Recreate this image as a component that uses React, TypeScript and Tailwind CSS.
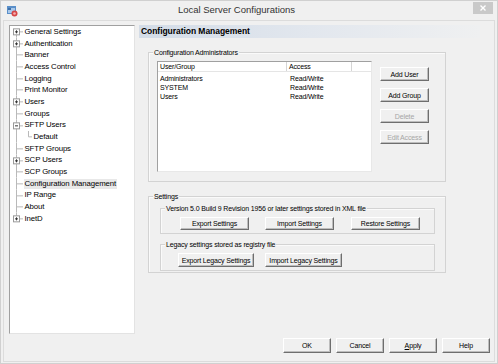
import React from "react"

type Node = {
  label: string
  box?: "+" | "-"
  level?: number
  first?: boolean
  last?: boolean
  selected?: boolean
}

const tree: Node[] = [
  { label: "General Settings", box: "+", first: true },
  { label: "Authentication", box: "+" },
  { label: "Banner" },
  { label: "Access Control" },
  { label: "Logging" },
  { label: "Print Monitor" },
  { label: "Users", box: "+" },
  { label: "Groups" },
  { label: "SFTP Users", box: "-" },
  { label: "Default", level: 1 },
  { label: "SFTP Groups" },
  { label: "SCP Users", box: "+" },
  { label: "SCP Groups" },
  { label: "Configuration Management", selected: true },
  { label: "IP Range" },
  { label: "About" },
  { label: "InetD", box: "+", last: true },
]

const admins = [
  ["Administrators", "Read/Write"],
  ["SYSTEM", "Read/Write"],
  ["Users", "Read/Write"],
]

function Gutter({ node }: { node: Node }) {
  const h = 11.7
  const c = h / 2
  const top = node.first ? c : 0
  const bottom = node.last ? c : h
  return (
    <svg width="13" height={h} viewBox={`0 0 13 ${h}`} className="shrink-0 overflow-visible">
      <line x1="6.5" y1={top} x2="6.5" y2={bottom} stroke="#b9b9b9" strokeWidth="1" />
      {!node.level && (
        <line x1={node.box ? 10 : 6.5} y1={c} x2="13" y2={c} stroke="#b9b9b9" strokeWidth="1" />
      )}
      {node.box && (
        <g>
          <rect x="3.5" y={c - 3} width="6" height="6" fill="#fff" stroke="#999" strokeWidth="1" />
          <line x1="5" y1={c} x2="8" y2={c} stroke="#333" strokeWidth="1" />
          {node.box === "+" && <line x1="6.5" y1={c - 1.5} x2="6.5" y2={c + 1.5} stroke="#333" strokeWidth="1" />}
        </g>
      )}
    </svg>
  )
}

function ChildGutter() {
  const h = 11.7
  const c = h / 2
  return (
    <svg width="9" height={h} viewBox={`0 0 9 ${h}`} className="shrink-0">
      <line x1="5.5" y1="0" x2="5.5" y2={c} stroke="#b9b9b9" strokeWidth="1" />
      <line x1="5.5" y1={c} x2="9" y2={c} stroke="#b9b9b9" strokeWidth="1" />
    </svg>
  )
}

function Btn({
  children,
  className,
  disabled,
}: {
  children: React.ReactNode
  className: string
  disabled?: boolean
}) {
  return (
    <div
      className={`flex items-center justify-center bg-[#f0f0f0] border border-t-white border-l-white border-r-[#6e6e6e] border-b-[#6e6e6e] shadow-[inset_-1px_-1px_0_#bdbdbd] text-[7px] tracking-[-0.15px] leading-none ${
        disabled ? "text-[#a6a6a6]" : "text-black"
      } ${className}`}
    >
      {children}
    </div>
  )
}

function Group({
  label,
  className,
  children,
}: {
  label: string
  className: string
  children?: React.ReactNode
}) {
  return (
    <div className={`relative border border-[#d3d3d3] shadow-[inset_1px_1px_0_#fafafa] ${className}`}>
      <span className="absolute left-[4px] top-[-5px] bg-[#f0f0f0] px-[1px] text-[7px] leading-[9px] tracking-[-0.15px] text-black whitespace-nowrap">
        {label}
      </span>
      {children}
    </div>
  )
}

export default function App() {
  return (
    <div className="w-[498px] h-[364px] bg-[#f0f0f0] border border-[#d0d0d0] flex flex-col font-['Liberation_Sans',Arial,sans-serif] overflow-hidden">
      {/* Title bar */}
      <div className="h-[19px] flex items-center shrink-0 relative">
        <svg width="11" height="11" viewBox="0 0 11 11" className="ml-[6px] mt-[1px]">
          <rect x="0" y="0" width="9" height="8" fill="#5a8fc9" />
          <rect x="1" y="2" width="7" height="5" fill="#a9c8ea" />
          <rect x="1" y="2" width="3" height="2" fill="#3d6fa8" />
          <circle cx="7.5" cy="7.5" r="3" fill="#d64545" />
          <circle cx="7.5" cy="7.5" r="1.3" fill="#f2b0b0" />
        </svg>
        <div className="flex-1 text-center text-[9.5px] text-[#333] pr-[18px]">Local Server Configurations</div>
        <div className="w-[20px] h-[12px] bg-[#c9c9c9] mr-[4px] mb-[6px] flex items-center justify-center">
          <svg width="6" height="6" viewBox="0 0 6 6">
            <path d="M0.5 0.5 L5.5 5.5 M5.5 0.5 L0.5 5.5" stroke="#fff" strokeWidth="1.4" />
          </svg>
        </div>
      </div>

      {/* Client */}
      <div className="mx-[2px] mb-[1px] flex-1 border border-[#dcdcdc] flex flex-col">
        <div className="flex pt-[4px] pl-[5px]">
          {/* Tree */}
          <div className="w-[126px] h-[309px] bg-white border border-t-[#a0a0a0] border-l-[#a0a0a0] border-r-[#e3e3e3] border-b-[#e3e3e3] flex flex-col">
            {tree.map((n) => (
              <div key={n.label} className="h-[11.7px] flex items-center">
                {n.level ? (
                  <>
                    <Gutter node={{ label: "", level: 1 }} />
                    <ChildGutter />
                  </>
                ) : (
                  <Gutter node={n} />
                )}
                <span
                  className={`ml-[1px] px-[0.5px] text-[7.8px] leading-[10px] tracking-[-0.1px] text-black whitespace-nowrap ${
                    n.selected ? "bg-[#e8e8e8]" : ""
                  }`}
                >
                  {n.label}
                </span>
              </div>
            ))}
          </div>

          {/* Right panel */}
          <div className="ml-[4px] w-[341px] flex flex-col">
            <div className="h-[13px] bg-gradient-to-r from-[#d3dce7] via-[#e2e7ee] to-[#eff0f1] flex items-center pl-[2px]">
              <span className="text-[8.5px] font-bold text-black tracking-[-0.05px]">Configuration Management</span>
            </div>

            <Group label="Configuration Administrators" className="mt-[14px] ml-[9px] w-[298px] h-[130px] flex pl-[8px] pt-[8px]">
              {/* List view */}
              <div className="w-[215px] h-[111px] bg-white border border-t-[#a0a0a0] border-l-[#a0a0a0] border-r-[#e8e8e8] border-b-[#e8e8e8] flex flex-col text-[7px] tracking-[-0.15px] text-black">
                <div className="h-[10px] flex border-b border-[#e5e5e5] leading-none">
                  <div className="w-[129px] border-r border-[#d5d5d5] flex items-center pl-[2px]">User/Group</div>
                  <div className="w-[65px] border-r border-[#d5d5d5] flex items-center pl-[2px]">Access</div>
                </div>
                <div className="pt-[1.5px] flex flex-col">
                  {admins.map(([u, a]) => (
                    <div key={u} className="h-[9px] flex items-center leading-none">
                      <div className="w-[129px] pl-[2px]">{u}</div>
                      <div className="pl-[3px]">{a}</div>
                    </div>
                  ))}
                </div>
              </div>
              <div className="ml-[8px] mt-[6px] flex flex-col gap-[7px]">
                <Btn className="w-[49px] h-[14px]">Add User</Btn>
                <Btn className="w-[49px] h-[14px]">Add Group</Btn>
                <Btn className="w-[49px] h-[14px]" disabled>
                  Delete
                </Btn>
                <Btn className="w-[49px] h-[14px]" disabled>
                  Edit Access
                </Btn>
              </div>
            </Group>

            <Group label="Settings" className="mt-[14px] ml-[9px] w-[298px] h-[77px] flex flex-col pl-[11px] pt-[11px]">
              <Group
                label="Version 5.0 Build 9 Revision 1956 or later settings stored in XML file"
                className="w-[275px] h-[26px] flex items-start pt-[8px] pl-[19px] gap-[16px]"
              >
                <Btn className="w-[69px] h-[13px]">Export Settings</Btn>
                <Btn className="w-[69px] h-[13px]">Import Settings</Btn>
                <Btn className="w-[69px] h-[13px] ml-[1px]">Restore Settings</Btn>
              </Group>
              <Group
                label="Legacy settings stored as registry file"
                className="mt-[10px] w-[275px] h-[27px] flex items-start pt-[8px] pl-[17px] gap-[11px]"
              >
                <Btn className="w-[76px] h-[14px]">Export Legacy Settings</Btn>
                <Btn className="w-[77px] h-[14px]">Import Legacy Settings</Btn>
              </Group>
            </Group>
          </div>
        </div>

        {/* Dialog buttons */}
        <div className="mt-[4px] flex justify-end gap-[5px] pr-[4px]">
          <Btn className="w-[48px] h-[15px]">OK</Btn>
          <Btn className="w-[48px] h-[15px]">Cancel</Btn>
          <Btn className="w-[48px] h-[15px]">
            <span>
              <span className="underline">A</span>pply
            </span>
          </Btn>
          <Btn className="w-[48px] h-[15px]">Help</Btn>
        </div>
      </div>
    </div>
  )
}
